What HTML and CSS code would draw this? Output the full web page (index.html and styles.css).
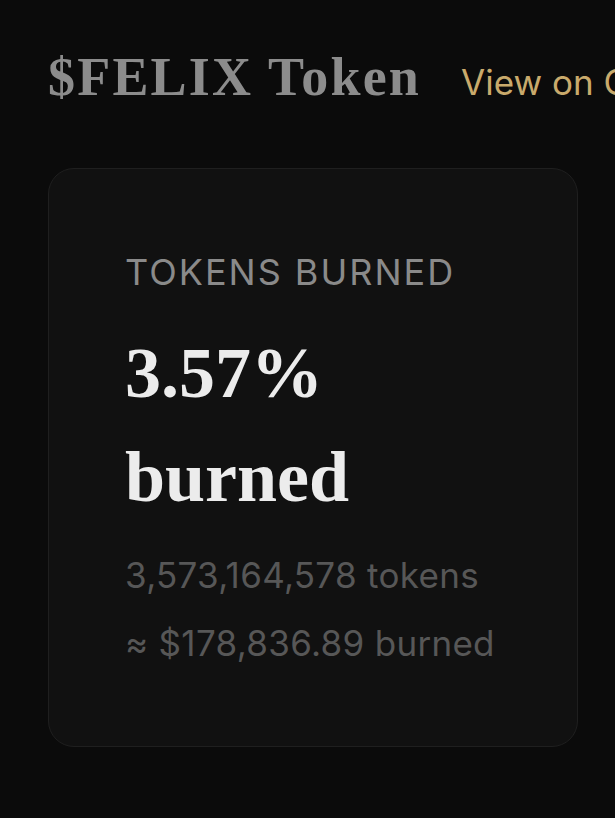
FILE: index.html
```html
<!DOCTYPE html>
<html lang="en">
<head>
<meta charset="utf-8">
<title>$FELIX Token</title>
<link rel="stylesheet" href="styles.css">
</head>
<body>
<div class="page">
  <header class="header">
    <h1 class="title">$FELIX Token</h1>
    <a class="link" href="#">View on CoinGecko</a>
  </header>
  <section class="card">
    <div class="label">TOKENS BURNED</div>
    <div class="value">3.57%<br>burned</div>
    <div class="sub">3,573,164,578 tokens</div>
    <div class="sub">≈ $178,836.89 burned</div>
  </section>
</div>
</body>
</html>
```
FILE: styles.css
```css
html, body {
  margin: 0;
  padding: 0;
  background: #0b0b0b;
}
body {
  overflow: hidden;
  width: 615px;
  height: 818px;
}
.page {
  padding: 45px 0 0 48px;
}
.header {
  display: flex;
  align-items: baseline;
  gap: 40px;
  white-space: nowrap;
}
.title {
  margin: 0;
  font-family: "Liberation Serif", serif;
  font-weight: 700;
  font-size: 54px;
  line-height: 64px;
  letter-spacing: 2.2px;
  color: #8c8c8c;
}
.link {
  font-family: Inter, sans-serif;
  font-size: 35px;
  color: #c9aa6c;
  text-decoration: none;
}
.card {
  margin-top: 59px;
  width: 528px;
  box-sizing: content-box;
  padding: 82px 0 69px 0;
  background: #111111;
  border: 1px solid #1f1f1f;
  border-radius: 26px;
}
.label, .value, .sub {
  padding-left: 76px;
}
.label {
  font-family: Inter, sans-serif;
  font-size: 36px;
  line-height: 42px;
  letter-spacing: 2px;
  color: #8a8a8a;
}
.value {
  margin-top: 28px;
  font-family: "Liberation Serif", serif;
  font-weight: 700;
  font-size: 72px;
  line-height: 104px;
  color: #ececec;
}
.sub {
  font-family: Inter, sans-serif;
  font-size: 35px;
  line-height: 68px;
  letter-spacing: 0.3px;
  color: #575757;
}
.value + .sub {
  margin-top: 12px;
}
```
